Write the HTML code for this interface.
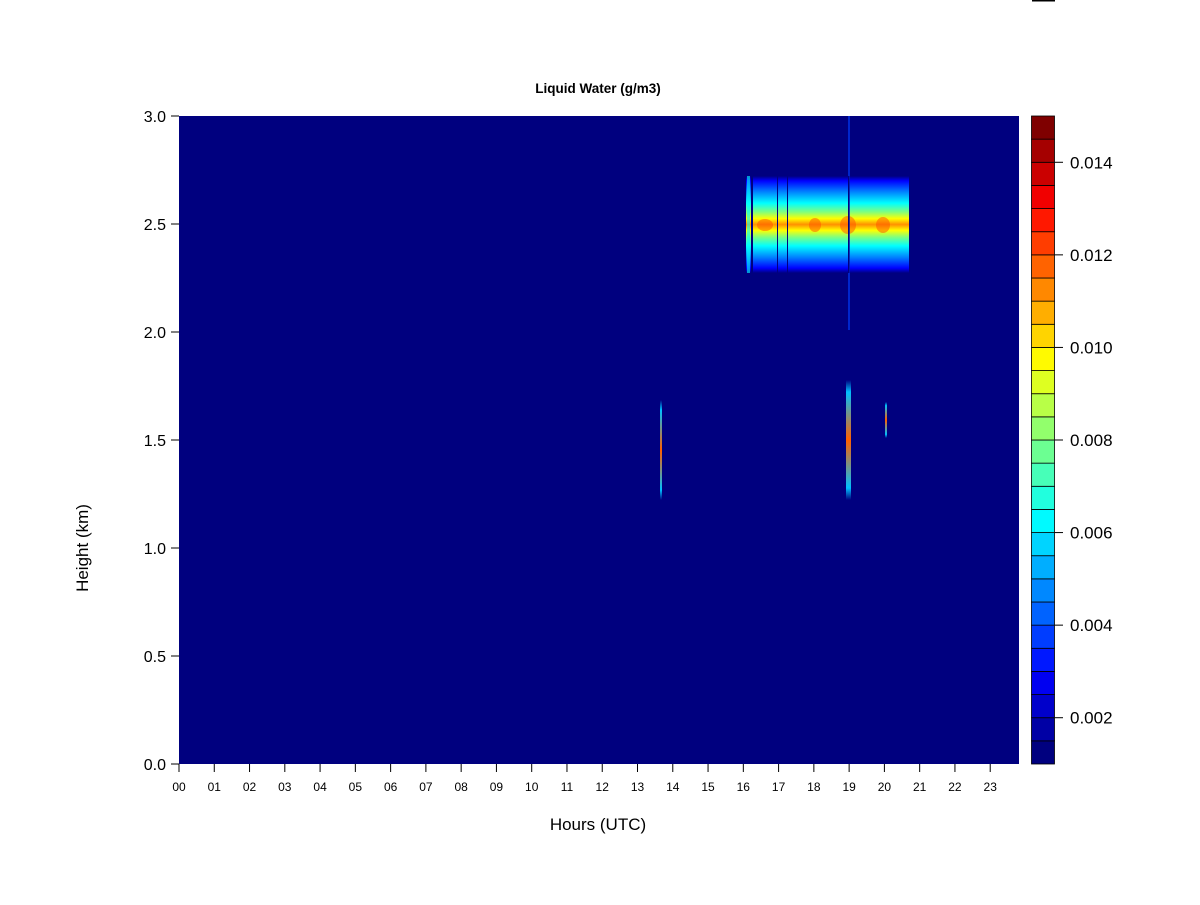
<!DOCTYPE html>
<html><head><meta charset="utf-8"><style>
html,body{margin:0;padding:0;background:#fff;}
svg text{font-family:"Liberation Sans",Arial,sans-serif;fill:#000;}
</style></head><body>
<svg id="s" width="1200" height="900" xmlns="http://www.w3.org/2000/svg">
<defs>
<linearGradient id="cl" x1="0" y1="0" x2="0" y2="1">
<stop offset="0" stop-color="#00007F"/>
<stop offset="0.05" stop-color="#0000FF"/>
<stop offset="0.16" stop-color="#007FFF"/>
<stop offset="0.28" stop-color="#00FFFF"/>
<stop offset="0.37" stop-color="#7FFF7F"/>
<stop offset="0.44" stop-color="#FFFF00"/>
<stop offset="0.5" stop-color="#FF9000"/>
<stop offset="0.56" stop-color="#FFFF00"/>
<stop offset="0.63" stop-color="#7FFF7F"/>
<stop offset="0.72" stop-color="#00FFFF"/>
<stop offset="0.84" stop-color="#007FFF"/>
<stop offset="0.95" stop-color="#0000FF"/>
<stop offset="1" stop-color="#00007F"/>
</linearGradient>
<linearGradient id="vl" x1="0" y1="0" x2="0" y2="1">
<stop offset="0" stop-color="#00007F"/>
<stop offset="0.1" stop-color="#00BFFF"/>
<stop offset="0.5" stop-color="#FF6000"/>
<stop offset="0.9" stop-color="#00BFFF"/>
<stop offset="1" stop-color="#00007F"/>
</linearGradient>
</defs>
<rect x="1032" y="0" width="23" height="1.5" fill="#000"/>
<text x="598" y="93" font-size="13.5" font-weight="bold" text-anchor="middle">Liquid Water (g/m3)</text>
<rect x="179" y="116" width="840" height="648" fill="#00007F"/>
<rect x="746" y="176" width="164" height="97" fill="url(#cl)"/>
<g fill="#FF5000" opacity="0.5">
<ellipse cx="765" cy="225" rx="8" ry="6"/><ellipse cx="815" cy="225" rx="6" ry="7"/>
<ellipse cx="848" cy="225" rx="8" ry="9"/><ellipse cx="883" cy="225" rx="7" ry="8"/>
</g>
<rect x="747" y="176" width="3" height="97" fill="#00FFFF" opacity="0.6"/>
<rect x="751" y="176" width="2" height="97" fill="#00007F"/>
<rect x="777" y="176" width="1" height="97" fill="#00007F"/>
<rect x="787" y="176" width="1" height="97" fill="#00007F"/>
<rect x="848" y="116" width="2" height="214" fill="#0040FF" opacity="0.6"/>
<rect x="848" y="176" width="1.5" height="97" fill="#00007F"/>
<rect x="909" y="176" width="2" height="97" fill="#00007F"/>
<rect x="660" y="400" width="2" height="100" fill="url(#vl)"/>
<rect x="846" y="380" width="5" height="120" fill="url(#vl)"/>
<rect x="885" y="402" width="2" height="36" fill="url(#vl)"/>
<g id="ticks" stroke="#000" stroke-width="1"></g>
<g id="labels"></g>
<text x="598" y="830" font-size="17" text-anchor="middle">Hours (UTC)</text>
<text transform="translate(88,548) rotate(-90)" font-size="17" text-anchor="middle">Height (km)</text>
<g id="cb"></g>
</svg>
<script>
var s=document.getElementById('s'),tk=document.getElementById('ticks'),lb=document.getElementById('labels'),cb=document.getElementById('cb');
var NS='http://www.w3.org/2000/svg';
function el(p,n,a,t){var e=document.createElementNS(NS,n);for(var k in a)e.setAttribute(k,a[k]);if(t!=null)e.textContent=t;p.appendChild(e);return e;}
for(var i=0;i<24;i++){var x=179+i*35.27;el(tk,'line',{x1:x,y1:764,x2:x,y2:772});
el(lb,'text',{x:x,y:791,'font-size':12,'text-anchor':'middle'},(i<10?'0':'')+i);}
for(var j=0;j<=6;j++){var y=764-j*108;el(tk,'line',{x1:171,y1:y,x2:179,y2:y});
el(lb,'text',{x:166,y:y+6,'font-size':16,'text-anchor':'end'},(j*0.5).toFixed(1));}
var st=[[0,0,127],[0,0,255],[0,127,255],[0,255,255],[127,255,127],[255,255,0],[255,127,0],[255,0,0],[127,0,0]];
var N=28,h=648/N;
for(var i=0;i<N;i++){var t=i/(N-1)*8,a=Math.floor(t),f=t-a;if(a>=8){a=7;f=1;}
var c=[0,1,2].map(function(k){return Math.round(st[a][k]+(st[a+1][k]-st[a][k])*f);});
el(cb,'rect',{x:1031.5,y:764-(i+1)*h,width:23,height:h,fill:'rgb('+c.join(',')+')',stroke:'#000','stroke-width':0.8});}
[0.002,0.004,0.006,0.008,0.010,0.012,0.014].forEach(function(v){var y=764-(v-0.001)/0.014*648;
el(cb,'line',{x1:1055,y1:y,x2:1063,y2:y,stroke:'#000'});
el(cb,'text',{x:1070,y:y+6,'font-size':17},v.toFixed(3));});
</script>
</body></html>
